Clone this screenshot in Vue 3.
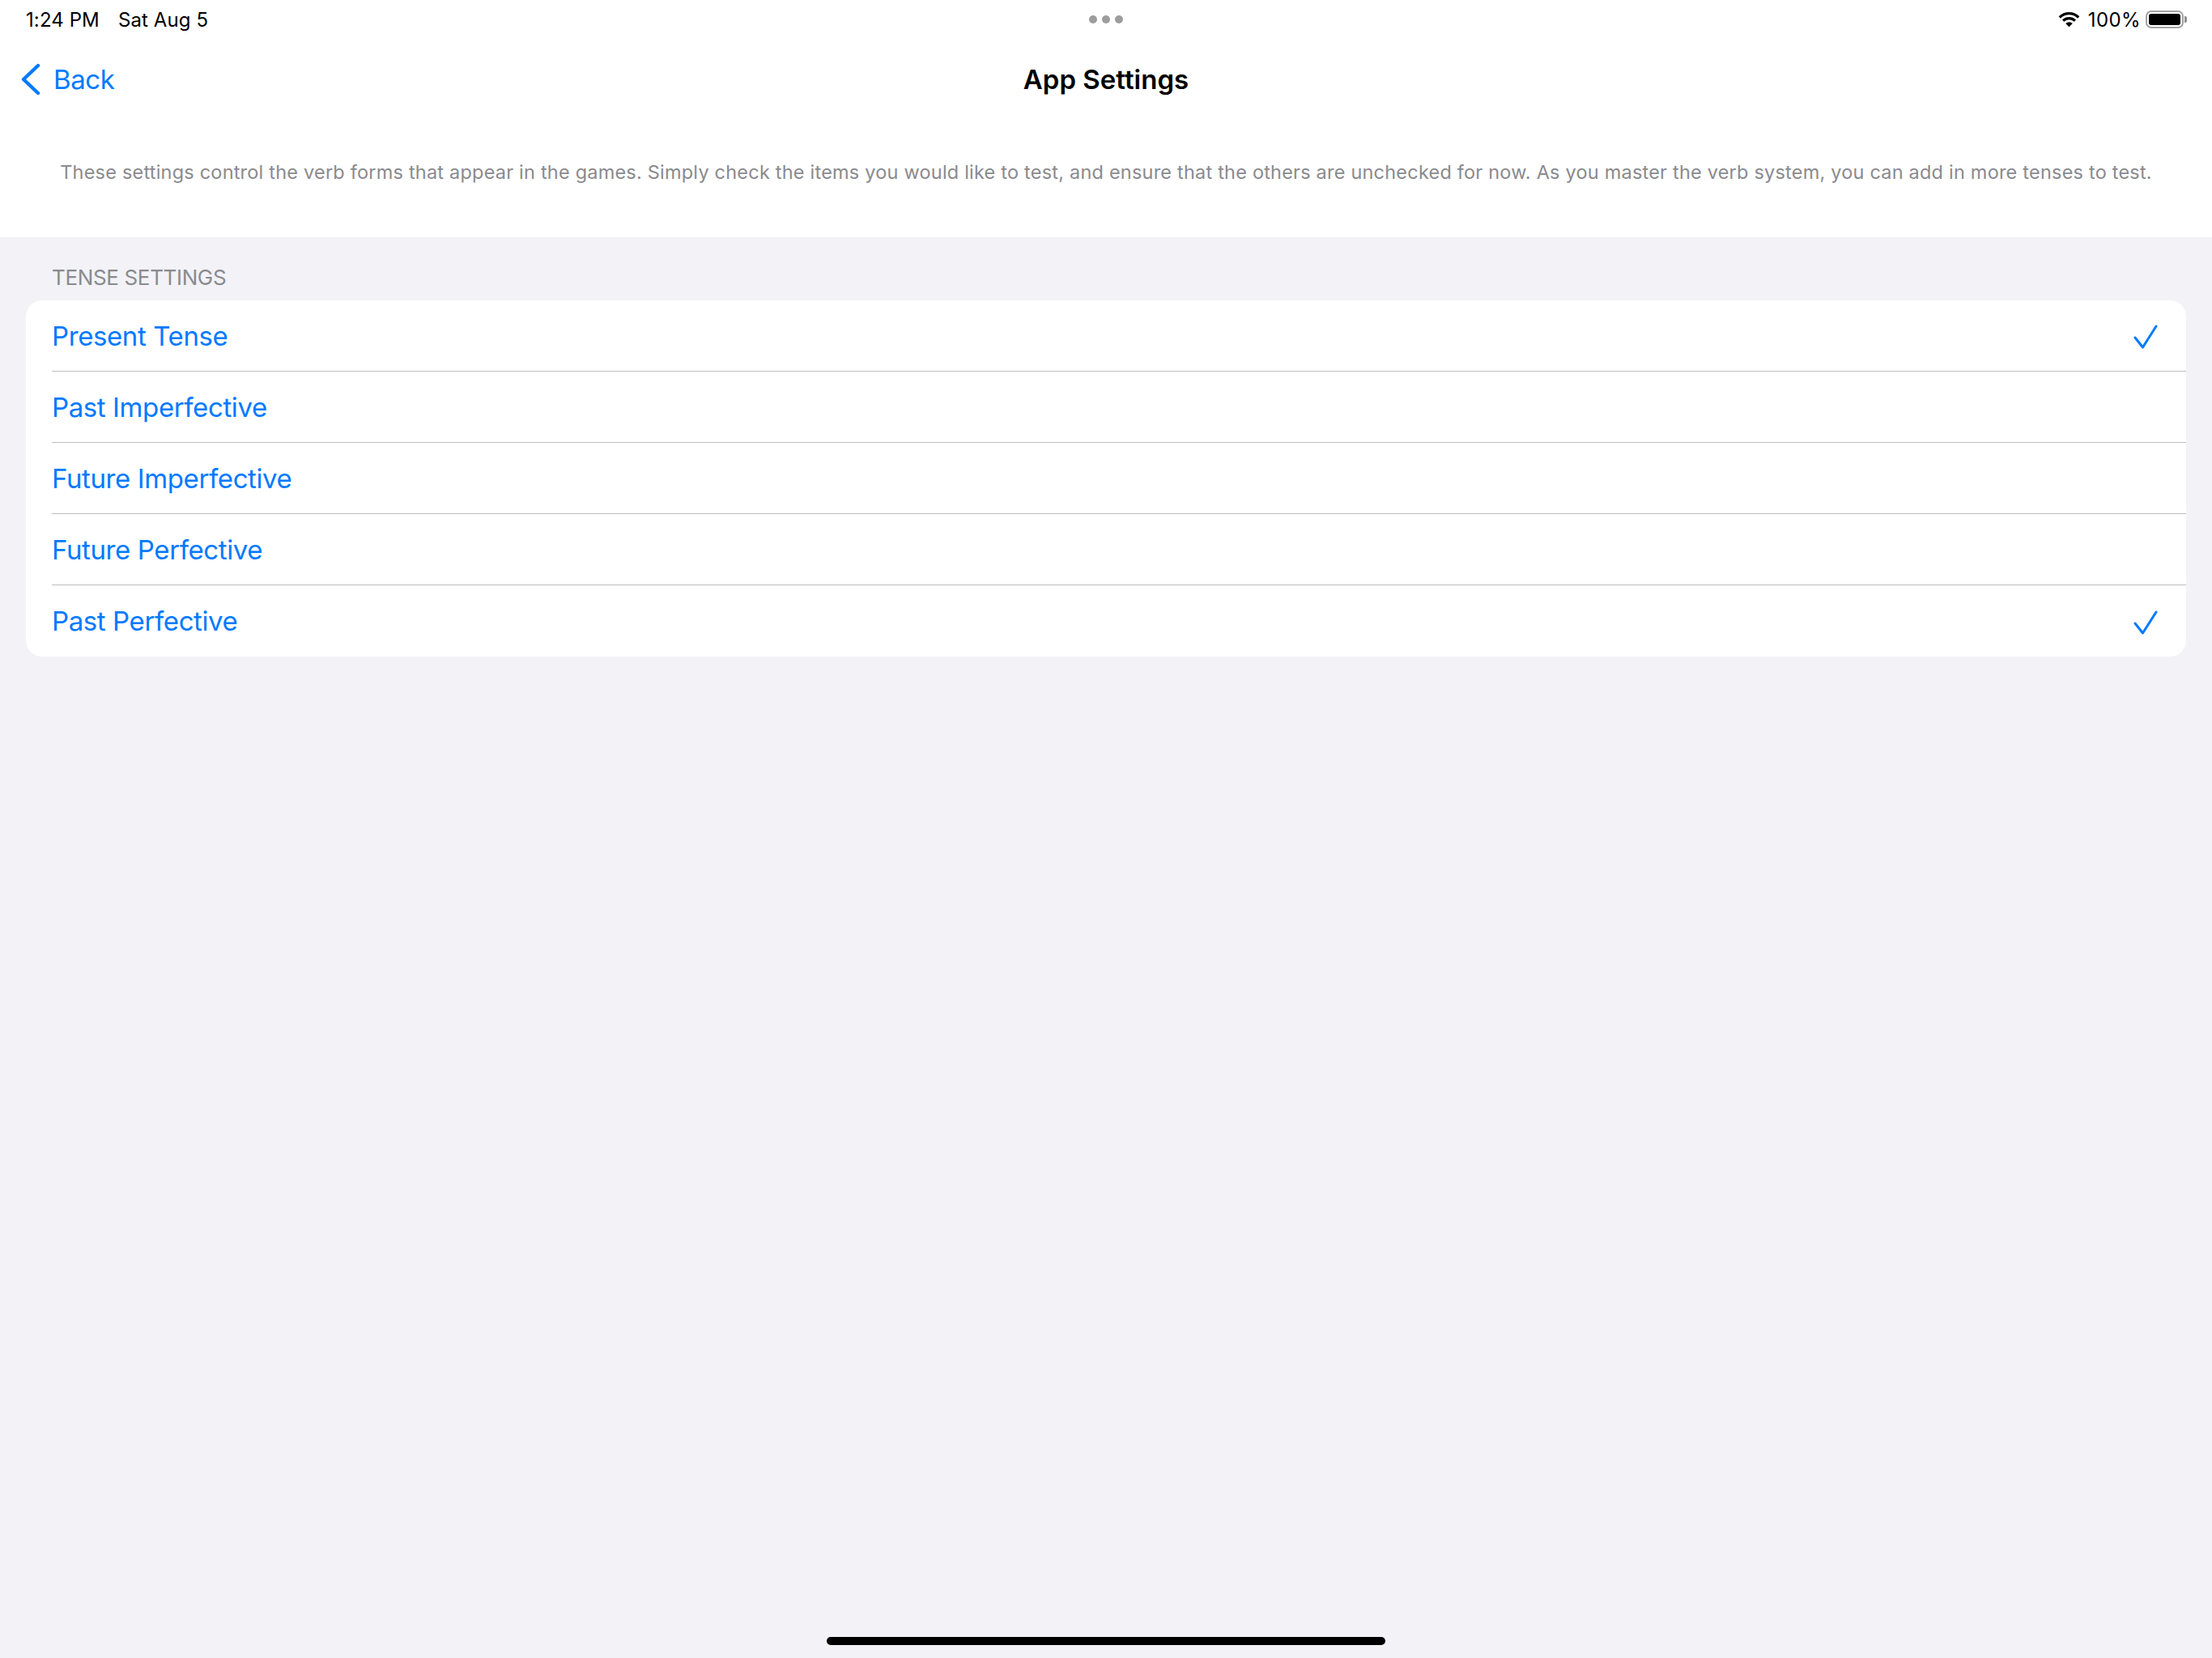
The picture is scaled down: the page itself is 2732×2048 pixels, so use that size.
<script setup>
  // tense rows, checked ones get the tick
  const tenses = [
    { name: 'Present Tense', checked: true },
    { name: 'Past Imperfective', checked: false },
    { name: 'Future Imperfective', checked: false },
    { name: 'Future Perfective', checked: false },
    { name: 'Past Perfective', checked: true }
  ]
</script>

<template>
  <div class="screen">
    <header class="top">
      <!-- status bar -->
      <div class="status">
        <div class="status-left">
          <span>1:24 PM</span>
          <span>Sat Aug 5</span>
        </div>
        <div class="dots"><i></i><i></i><i></i></div>
        <div class="status-right">
          <svg class="wifi" width="27" height="20" viewBox="0 0 30 22">
            <path d="M2 8.2a18.6 18.6 0 0 1 26 0" fill="none" stroke="#000" stroke-width="3.6" />
            <path d="M6.8 12.8a11.8 11.8 0 0 1 16.4 0" fill="none" stroke="#000" stroke-width="3.6" />
            <path d="M10.2 16.6l4.8 4.8 4.8-4.8a7 7 0 0 0-9.6 0z" fill="#000" />
          </svg>
          <span class="pct">100%</span>
          <div class="battery"><div class="battery-fill"></div></div>
          <div class="battery-cap"></div>
        </div>
      </div>
      <!-- nav bar -->
      <div class="nav">
        <div class="back">
          <svg width="26" height="40" viewBox="0 0 26 40">
            <path d="M22 3L4 20l18 17" fill="none" stroke="#007aff" stroke-width="4.4" stroke-linecap="round" stroke-linejoin="round" />
          </svg>
          <span>Back</span>
        </div>
        <div class="title">App Settings</div>
      </div>
      <p class="intro">These settings control the verb forms that appear in the games. Simply check the items you would like to test, and ensure that the others are unchecked for now. As you master the verb system, you can add in more tenses to test.</p>
    </header>

    <main class="body">
      <div class="section-title">TENSE SETTINGS</div>
      <div class="card">
        <div v-for="t in tenses" :key="t.name" class="row">
          <div class="row-inner">
            <span>{{ t.name }}</span>
            <svg v-if="t.checked" class="tick" width="30" height="30" viewBox="0 0 30 30">
              <path d="M2 16l9.5 12L28 2" fill="none" stroke="#007aff" stroke-width="3" stroke-linecap="round" stroke-linejoin="round" />
            </svg>
          </div>
        </div>
      </div>
    </main>

    <div class="home-bar"></div>
  </div>
</template>

<style>
  html, body {
    margin: 0;
    background: #f2f2f7;
  }
</style>

<style scoped>
  .screen {
    width: 2732px;
    height: 2048px;
    display: flex;
    flex-direction: column;
    position: relative;
    background: #f2f2f7;
    font-family: Inter, "Liberation Sans", sans-serif;
    overflow: hidden;
  }
  .top {
    height: 293px;
    background: #fff;
    flex-shrink: 0;
  }
  .status {
    height: 48px;
    padding: 0 31px 0 32px;
    display: flex;
    align-items: center;
    justify-content: space-between;
    font-size: 24px;
    letter-spacing: 0.1px;
    color: #000;
    position: relative;
  }
  .status-left {
    display: flex;
    gap: 23px;
  }
  .dots {
    position: absolute;
    left: 1345px;
    top: 19px;
    display: flex;
    gap: 6px;
  }
  .dots i {
    width: 10px;
    height: 10px;
    border-radius: 50%;
    background: #9d9d9d;
  }
  .status-right {
    display: flex;
    align-items: center;
  }
  .pct {
    margin-left: 10px;
    letter-spacing: 0.4px;
  }
  .battery {
    margin-left: 6px;
    width: 47px;
    height: 22px;
    box-sizing: border-box;
    border: 2px solid #a3a3a3;
    border-radius: 7px;
    padding: 2px;
  }
  .battery-fill {
    height: 100%;
    background: #000;
    border-radius: 3px;
  }
  .battery-cap {
    width: 3px;
    height: 8px;
    margin-left: 1px;
    background: #8f8f8f;
    border-radius: 0 2px 2px 0;
  }
  .nav {
    height: 100px;
    position: relative;
    display: flex;
    align-items: center;
    justify-content: center;
  }
  .back {
    position: absolute;
    left: 25px;
    top: 30px;
    display: flex;
    align-items: center;
    gap: 15px;
    color: #007aff;
    font-size: 33px;
    letter-spacing: -0.4px;
    line-height: 40px;
  }
  .title {
    font-size: 33px;
    font-weight: 600;
    color: #000;
  }
  .intro {
    margin: 49px 0 0;
    text-align: center;
    font-size: 23.5px;
    line-height: 32px;
    color: #8a8a8e;
    white-space: nowrap;
    letter-spacing: 0.21px;
  }
  .body {
    padding: 0 32px;
  }
  .section-title {
    height: 78px;
    box-sizing: border-box;
    padding: 34px 0 0 32px;
    font-size: 26px;
    letter-spacing: -0.35px;
    line-height: 32px;
    color: #8a8a8e;
  }
  .card {
    background: #fff;
    border-radius: 20px;
    overflow: hidden;
  }
  .row {
    height: 88px;
    padding-left: 32px;
    box-sizing: border-box;
  }
  .row-inner {
    height: 88px;
    box-sizing: border-box;
    display: flex;
    align-items: center;
    justify-content: space-between;
    padding-right: 35px;
    font-size: 33px;
    letter-spacing: -0.4px;
    color: #007aff;
    border-bottom: 1px solid #bdbdc0;
  }
  .tick {
    margin-top: 3px;
  }
  .row:last-child .row-inner {
    border-bottom: none;
  }
  .home-bar {
    position: absolute;
    left: 1021px;
    top: 2022px;
    width: 690px;
    height: 10px;
    border-radius: 5px;
    background: #000;
  }
</style>
